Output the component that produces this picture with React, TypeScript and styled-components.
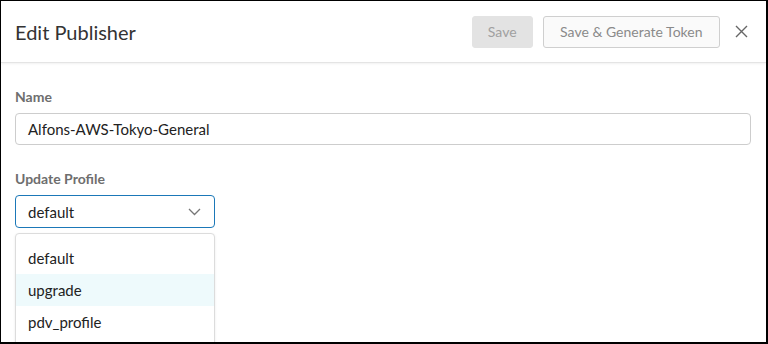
import React from "react";
import styled, { createGlobalStyle } from "styled-components";

const Global = createGlobalStyle`
  html, body { margin: 0; padding: 0; background: #000; }
  body { font-family: Lato, "Open Sans", sans-serif; }
  * { box-sizing: border-box; }
`;

const Frame = styled.div`
  width: 768px;
  height: 344px;
  border-style: solid;
  border-color: #000;
  border-width: 1px 2px 2px 1px;
  background: #fff;
  overflow: hidden;
  display: flex;
  flex-direction: column;
`;

const Header = styled.header`
  height: 62px;
  flex: none;
  display: flex;
  align-items: center;
  padding: 0 15px 0 14px;
  border-bottom: 1px solid #e4e4e4;
  box-shadow: 0 1px 2px rgba(0, 0, 0, 0.06);
`;

const Title = styled.h1`
  margin: 0;
  flex: 1;
  font-size: 20px;
  font-weight: 400;
  color: #333;
  padding-top: 1px;
`;

const Button = styled.button<{ $variant: "disabled" | "outline" }>`
  height: 32px;
  padding: 0 ${(p) => (p.$variant === "disabled" ? "15px" : "16.5px")};
  border-radius: 3px;
  font-family: Lato, sans-serif;
  font-size: 14px;
  margin-left: 10px;
  background: ${(p) => (p.$variant === "disabled" ? "#e3e3e3" : "#fafafa")};
  color: ${(p) => (p.$variant === "disabled" ? "#a0a0a0" : "#8a8a8a")};
  border: 1px solid ${(p) => (p.$variant === "disabled" ? "#e3e3e3" : "#cfcfcf")};
`;

const CloseBtn = styled.button`
  width: 20px;
  height: 20px;
  margin-left: 11px;
  padding: 0;
  border: none;
  background: none;
  display: flex;
  align-items: center;
  justify-content: center;
`;

const Body = styled.div`
  padding: 25px 15px 0 14px;
  display: flex;
  flex-direction: column;
`;

const Label = styled.label`
  font-size: 14px;
  font-weight: 700;
  color: #6e6e6e;
  margin-bottom: 8px;
  line-height: 17px;
`;

const TextInput = styled.div`
  height: 32px;
  border: 1px solid #cdcdcd;
  border-radius: 4px;
  display: flex;
  align-items: center;
  padding: 0 12px;
  font-size: 15px;
  color: #222;
  margin-bottom: 25px;
`;

const SelectWrap = styled.div`
  position: relative;
  width: 200px;
`;

const SelectBox = styled.div`
  height: 33px;
  border: 1px solid #1b78b8;
  border-radius: 4px;
  display: flex;
  align-items: center;
  justify-content: space-between;
  padding: 0 13px 0 12px;
  font-size: 15px;
  color: #222;
`;

const Menu = styled.ul`
  position: absolute;
  top: 38px;
  left: 0;
  width: 200px;
  margin: 0;
  padding: 8px 0;
  list-style: none;
  background: #fff;
  border: 1px solid #dcdcdc;
  border-radius: 4px;
  box-shadow: 0 1px 3px rgba(0, 0, 0, 0.08);
`;

const Item = styled.li<{ $active?: boolean }>`
  height: 32px;
  display: flex;
  align-items: center;
  padding: 0 12px;
  font-size: 15px;
  color: #222;
  background: ${(p) => (p.$active ? "#eefafc" : "transparent")};
`;

export default function App() {
  return (
    <>
      <Global />
      <Frame>
        <Header>
          <Title>Edit Publisher</Title>
          <Button $variant="disabled">Save</Button>
          <Button $variant="outline">Save &amp; Generate Token</Button>
          <CloseBtn aria-label="Close">
            <svg width="13" height="13" viewBox="0 0 13 13">
              <path d="M1 1L12 12M12 1L1 12" stroke="#666" strokeWidth="1.4" />
            </svg>
          </CloseBtn>
        </Header>
        <Body>
          <Label>Name</Label>
          <TextInput>Alfons-AWS-Tokyo-General</TextInput>
          <Label>Update Profile</Label>
          <SelectWrap>
            <SelectBox>
              <span>default</span>
              <svg width="13" height="8" viewBox="0 0 13 8">
                <path d="M1 1L6.5 6.5L12 1" stroke="#777" strokeWidth="1.3" fill="none" />
              </svg>
            </SelectBox>
            <Menu>
              <Item>default</Item>
              <Item $active>upgrade</Item>
              <Item>pdv_profile</Item>
            </Menu>
          </SelectWrap>
        </Body>
      </Frame>
    </>
  );
}
